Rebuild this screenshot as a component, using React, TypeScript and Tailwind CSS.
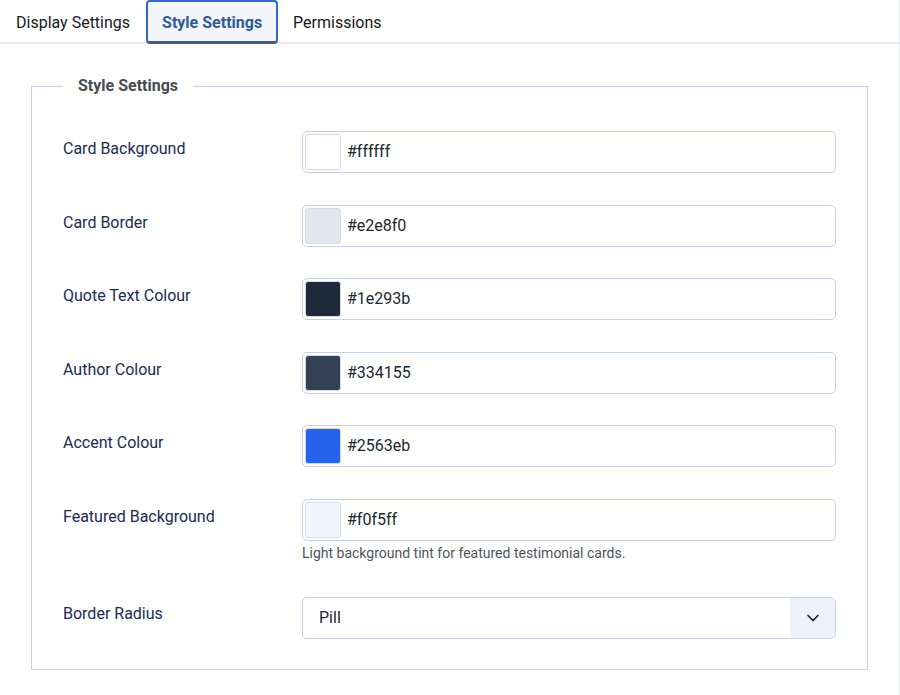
import { ChevronDown } from "lucide-react";

const colourFields = [
  { label: "Card Background", value: "#ffffff" },
  { label: "Card Border", value: "#e2e8f0" },
  { label: "Quote Text Colour", value: "#1e293b" },
  { label: "Author Colour", value: "#334155" },
  { label: "Accent Colour", value: "#2563eb" },
  {
    label: "Featured Background",
    value: "#f0f5ff",
    help: "Light background tint for featured testimonial cards.",
  },
];

function ColourRow({ label, value, help }: { label: string; value: string; help?: string }) {
  return (
    <div className="flex">
      <label className="w-[239px] shrink-0 pt-[6px] text-[16px] leading-6 text-[#1c2b52]">{label}</label>
      <div className="flex-1">
        <div className="flex h-[42px] items-center rounded-[5px] border border-[#c5d1e4] bg-white pl-[2px]">
          {/* swatch */}
          <span
            className="h-[36px] w-[36px] rounded-[3px] border border-[#d6dbe3]"
            style={{ backgroundColor: value }}
          />
          <span className="ml-[6px] text-[16px] text-[#22262b]">{value}</span>
        </div>
        {help && <p className="mt-[2px] text-[14px] leading-5 text-[#505459]">{help}</p>}
      </div>
    </div>
  );
}

export default function App() {
  return (
    <div className="h-[695px] w-[900px] border-r border-[#e8ecf2] bg-white font-['Roboto',sans-serif]">
      {/* Tabs */}
      <div className="flex h-[44px] items-stretch border-b-2 border-[#e6eaf0] pl-[16px] text-[16px] text-[#16181b]">
        <button className="mr-[16px] flex items-center pt-[3px]">Display Settings</button>
        <button className="-mb-[2px] flex w-[132px] items-center justify-center rounded-[4px] border-2 border-b-[3px] border-[#2e6bcb] border-b-[#4b5b77] bg-[#f3f5fa] pt-[3px] font-bold text-[#2f5a96]">
          Style Settings
        </button>
        <button className="ml-[15px] flex items-center pt-[3px]">Permissions</button>
      </div>

      {/* Fieldset */}
      <div className="px-[31px] pt-[30px]">
        <fieldset className="h-[596px] border border-[#c7d3e7] px-[31px] pb-[30px] pt-[33px]">
          <legend className="px-[15px] text-[16px] font-bold leading-6 text-[#474b52]">Style Settings</legend>

          <div className="flex flex-col gap-[31.5px]">
            {colourFields.map((f) => (
              <ColourRow key={f.label} {...f} />
            ))}

            <div className="mt-[3px] flex">
              <label className="w-[239px] shrink-0 pt-[5px] text-[16px] leading-6 text-[#1c2b52]">Border Radius</label>
              <div className="flex h-[42px] flex-1 items-center overflow-hidden rounded-[5px] border border-[#c5d1e4] bg-white">
                <span className="flex-1 pl-[16px] text-[16px] text-[#22262b]">Pill</span>
                <span className="flex h-full w-[45px] items-center justify-center bg-[#eef2fa]">
                  <ChevronDown size={20} strokeWidth={2} className="text-[#1a1c1f]" />
                </span>
              </div>
            </div>
          </div>
        </fieldset>
      </div>
    </div>
  );
}
